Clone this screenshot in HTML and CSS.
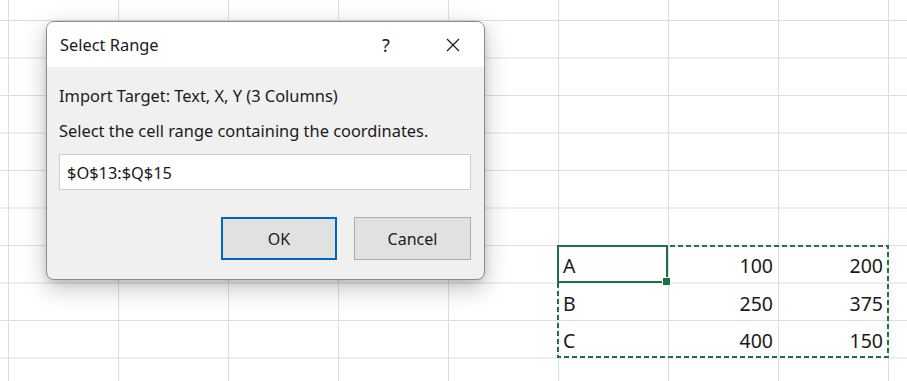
FILE: index.html
```html
<!DOCTYPE html>
<html lang="en">
<head>
<meta charset="utf-8">
<title>Select Range</title>
<link rel="stylesheet" href="styles.css">
</head>
<body>
<div class="sheet">
  <div class="data">
    <div class="cell text">A</div><div class="cell num">100</div><div class="cell num">200</div>
    <div class="cell text">B</div><div class="cell num">250</div><div class="cell num">375</div>
    <div class="cell text">C</div><div class="cell num">400</div><div class="cell num">150</div>
    <svg class="marquee" width="332" height="113" viewBox="0 0 332 113">
      <rect x="1" y="1" width="330" height="111" fill="none" stroke="#1e7145" stroke-width="2" stroke-dasharray="5 3"/>
    </svg>
    <div class="active"><span class="handle"></span></div>
  </div>
</div>

<div class="dialog">
  <div class="titlebar">
    <div class="title">Select Range</div>
    <div class="cap help">?</div>
    <div class="cap close">
      <svg width="14" height="14" viewBox="0 0 14 14"><path d="M1 1 L13 13 M13 1 L1 13" stroke="#1b1b1b" stroke-width="1.2" fill="none"/></svg>
    </div>
  </div>
  <div class="content">
    <p class="line first">Import Target: Text, X, Y (3 Columns)</p>
    <p class="line second">Select the cell range containing the coordinates.</p>
    <div class="input">$O$13:$Q$15</div>
    <div class="buttons">
      <div class="btn ok">OK</div>
      <div class="btn cancel">Cancel</div>
    </div>
  </div>
</div>
</body>
</html>
```
FILE: styles.css
```css
html, body {
  margin: 0;
  padding: 0;
}
body {
  width: 907px;
  height: 381px;
  overflow: hidden;
  background: #ffffff;
  font-family: "Noto Sans", "Open Sans", sans-serif;
  color: #1a1a1a;
  position: relative;
}
.sheet {
  width: 907px;
  height: 381px;
  box-sizing: border-box;
  padding: 245px 0 0 558px;
  background-color: #ffffff;
  background-image:
    linear-gradient(to right, #dedede 1px, transparent 1px),
    linear-gradient(to bottom, #dedede 1px, transparent 1px);
  background-size: 110px 100%, 100% 37.5px;
  background-position: 8px 0, 0 20px;
}
.data {
  position: relative;
  display: grid;
  grid-template-columns: repeat(3, 110px);
  grid-template-rows: repeat(3, 37.5px);
}
.cell {
  display: flex;
  align-items: center;
  font-size: 19.5px;
  color: #1a1a1a;
  padding: 4px 5px 0 5px;
}
.cell.num {
  justify-content: flex-end;
}
.marquee {
  position: absolute;
  left: -1px;
  top: 0;
}
.active {
  position: absolute;
  left: -1px;
  top: 0;
  width: 111px;
  height: 38px;
  box-sizing: border-box;
  border: 2px solid #1e7145;
}
.handle {
  position: absolute;
  right: -5px;
  bottom: -5px;
  width: 7px;
  height: 7px;
  background: #1e7145;
  border: 1px solid #ffffff;
}

.dialog {
  position: absolute;
  left: 46px;
  top: 21px;
  width: 439px;
  height: 259px;
  box-sizing: border-box;
  border: 1px solid #8c8c8c;
  border-radius: 8px;
  background: #f0f0f0;
  overflow: hidden;
  box-shadow: 0 8px 24px rgba(0, 0, 0, 0.24), 0 2px 6px rgba(0, 0, 0, 0.12);
  display: flex;
  flex-direction: column;
}
.titlebar {
  height: 45px;
  background: #ffffff;
  display: flex;
  align-items: center;
  padding-right: 8px;
  gap: 21px;
}
.title {
  flex: 1;
  padding-left: 13px;
  font-size: 16.4px;
  color: #1a1a1a;
}
.cap {
  width: 46px;
  height: 45px;
  display: flex;
  align-items: center;
  justify-content: center;
}
.help {
  font-size: 18px;
  color: #1b1b1b;
}
.content {
  flex: 1;
  padding: 19px 13px 0 12px;
  display: flex;
  flex-direction: column;
}
.line {
  margin: 0;
  font-size: 16.4px;
  line-height: 20px;
  color: #1a1a1a;
}
.second {
  margin-top: 15px;
}
.input {
  margin-top: 13px;
  height: 36px;
  box-sizing: border-box;
  border: 1px solid #cfcfcf;
  background: #ffffff;
  padding-left: 7px;
  display: flex;
  align-items: center;
  font-size: 16.4px;
  color: #1a1a1a;
}
.buttons {
  margin-top: 27px;
  display: flex;
  justify-content: flex-end;
  gap: 17px;
}
.btn {
  height: 43px;
  box-sizing: border-box;
  background: #e1e1e1;
  display: flex;
  align-items: center;
  justify-content: center;
  font-size: 16px;
  color: #1a1a1a;
}
.ok {
  width: 116px;
  border: 2px solid #0067c0;
}
.cancel {
  width: 117px;
  border: 1px solid #adadad;
}
```
